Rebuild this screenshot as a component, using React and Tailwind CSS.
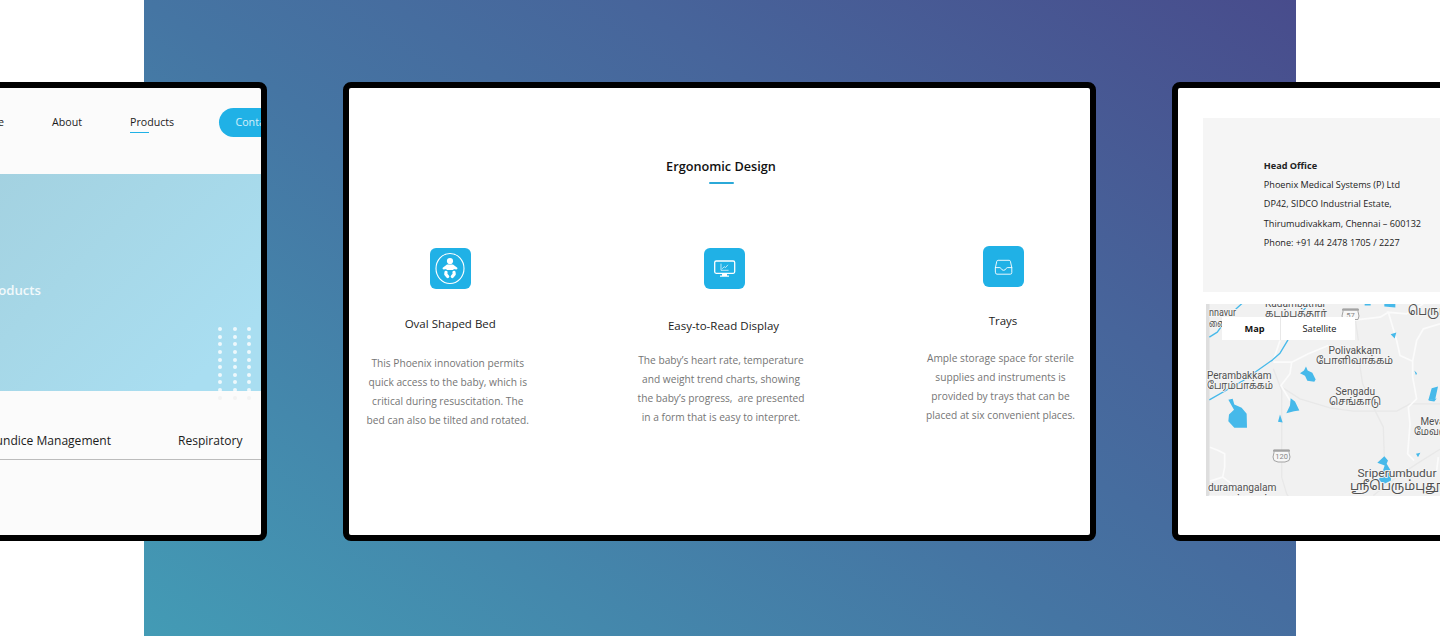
const features = [
  {
    title: "Oval Shaped Bed",
    icon: "baby",
    lines: ["This Phoenix innovation permits", "quick access to the baby, which is", "critical during resuscitation. The", "bed can also be tilted and rotated."],
    column: "w-[163.500px] pt-[160px]",
    iconBox: "ml-[5px]",
    heading: "mt-[26px] ml-[5px]",
    copy: "mt-[21px]",
  },
  {
    title: "Easy-to-Read Display",
    icon: "monitor",
    lines: ["The baby’s heart rate, temperature", "and weight trend charts, showing", "the baby’s progress,  are presented", "in a form that is easy to interpret."],
    column: "ml-[107.500px] w-[168px] pt-[160px]",
    iconBox: "ml-[6px]",
    heading: "mt-[27.500px] ml-[5px]",
    copy: "mt-[16.500px]",
  },
  {
    title: "Trays",
    icon: "tray",
    lines: ["Ample storage space for sterile", "supplies and instruments is", "provided by trays that can be", "placed at six convenient places."],
    column: "ml-[120.500px] w-[150px] pt-[157.500px]",
    iconBox: "ml-[6px]",
    heading: "mt-[25.500px] ml-[5px]",
    copy: "mt-[18.500px]",
  },
];

function Device({ children, tone }) {
  return (
    <div className={`h-[459px] w-[753px] shrink-0 overflow-hidden rounded-[8px] border-[6px] border-black ${tone}`}>
      {children}
    </div>
  );
}

function FeatureIcon({ name }) {
  return (
    <svg width="41" height="41" viewBox="0 0 41 41" fill="none" stroke="#fff" strokeLinecap="round" strokeLinejoin="round">
      <rect width="41" height="41" rx="6" fill="#20b1e6" stroke="none" />
      {name === "baby" && (
        <g>
          <ellipse cx="20" cy="20.5" rx="14" ry="15" strokeWidth="1.1" />
          <circle cx="20" cy="13" r="3.1" fill="#fff" stroke="none" />
          <path d="M17 16.600h6l4.300 3.200q.7 1.500-1 1.700l-2.800-.6v1.200h-7v-1.200l-2.800.6q-1.700-.2-1-1.700z" fill="#fff" stroke="none" />
          <path d="M16 24.400l-.2 1.800 1.900 2.300M24 24.400l.2 1.800-1.900 2.300" strokeWidth="3.200" />
        </g>
      )}
      {name === "monitor" && (
        <g>
          <rect x="10.700" y="13" width="20" height="12.300" rx="1.500" strokeWidth="1.300" />
          <path d="M18 25.500h5v2h2v1.300h-9v-1.300h2z" fill="#fff" stroke="none" />
          <path d="M17 16v6.300h7.200M18.500 20.500l1.700-1.800 1.300.9 2.200-2.500" strokeWidth=".7" />
        </g>
      )}
      {name === "tray" && (
        <g strokeWidth=".9">
          <path d="M12.400 21.600l1.400-6.300q.3-1 1.300-1h11q1 0 1.300 1l1.400 6.300v5q0 1.600-1.600 1.600H14q-1.600 0-1.600-1.600z" />
          <path d="M12.400 21.600h4.500q.7 0 1 .8 1 1.900 2.700 1.900t2.700-1.900q.3-.8 1-.8h4.500" />
        </g>
      )}
    </svg>
  );
}

function ProductsScreen() {
  return (
    <div className="flex h-full flex-col text-[#1c1c1c]">
      <nav className="flex h-[85.500px] shrink-0 text-[10.650px] leading-[16px]">
        <span className="ml-[454px] mt-[26px] w-[78px] shrink-0">Home</span>
        <span className="mt-[26px] w-[78px] shrink-0">About</span>
        <div className="mt-[26px] w-[88.500px] shrink-0">
          <div>Products</div>
          <div className="mt-[1.500px] h-[1.500px] w-[19px] bg-[#20b1e6]" />
        </div>
        <span className="mt-[20px] h-[28.500px] w-[88px] shrink-0 rounded-full bg-[#20b1e6] pl-[17px] pt-[6px] text-white/80">
          Contact us
        </span>
      </nav>
      <div className="relative flex h-[217.500px] shrink-0 bg-linear-[135deg,#a3d1e0_48%,#a6d7e7_68%,#a9def1_92%]">
        <span className="mt-[106px] w-[521px] text-right text-[13.200px] font-semibold leading-[20px] text-white/85">Products</span>
        <div className="absolute left-[698px] top-[153.500px] grid grid-cols-3 gap-x-[10.700px] gap-y-[3.650px]">
          {Array.from({ length: 30 }, (_, i) => (
            <span key={i} className={`size-[4px] rounded-full ${i < 27 ? "bg-white/80" : "bg-[#f3f3f3]"}`} />
          ))}
        </div>
      </div>
      <div className="flex h-[69px] shrink-0 border-b border-[#bcbcbc] pt-[39.500px] text-[12.050px] leading-[20px]">
        <span className="w-[591px] text-right">Jaundice Management</span>
        <span className="ml-[67px]">Respiratory</span>
      </div>
    </div>
  );
}

function FeatureScreen() {
  return (
    <div className="relative flex h-full items-start pl-[17px]">
      <div className="absolute left-[272px] top-[68px] flex w-[200px] flex-col items-center">
        <h2 className="text-[12.700px] font-semibold leading-[20px] text-[#111]">Ergonomic Design</h2>
        <div className="mt-[6px] h-[2px] w-[25px] rounded-full bg-[#2ba9d8]" />
      </div>
      <div className="flex items-start">
        {features.map((f) => (
          <section key={f.title} className={`flex shrink-0 flex-col items-center ${f.column}`}>
            <div className={f.iconBox}>
              <FeatureIcon name={f.icon} />
            </div>
            <h3 className={`whitespace-nowrap text-[11.500px] leading-[18px] text-[#1c1c1c] ${f.heading}`}>{f.title}</h3>
            <div className={`text-center text-[10.200px] leading-[19px] text-[#757575] ${f.copy}`}>
              {f.lines.map((l) => (
                <p key={l} className="whitespace-pre">{l}</p>
              ))}
            </div>
          </section>
        ))}
      </div>
    </div>
  );
}

function Label({ x, y, w, size = 10.5, children }) {
  return (
    <text x={x} y={y} fontSize={size} textLength={w} lengthAdjust="spacingAndGlyphs" fill="#505050" stroke="#f6f6f6" strokeWidth="1.600" paintOrder="stroke">
      {children}
    </text>
  );
}

function RegionMap() {
  return (
    <svg width="254" height="192" viewBox="1206 303.500 254 192" className="font-[family-name:Roboto,'Noto_Sans_Tamil',sans-serif]">
      <rect x="1206" y="303" width="254" height="193" fill="#f1f1f1" />
      <rect x="1206" y="303" width="3.500" height="193" fill="#dedede" />
      <g transform="translate(1190 290) scale(.33333)" fill="none" strokeLinejoin="round">
        <g stroke="#e8e8e8" strokeWidth="4">
          <path d="M250 235L275 300V560L290 610L310 640M275 290L330 325L420 352L490 362H620L660 340H760M500 165L518 280L550 350L580 410L583 500L600 560M495 80L505 150M550 615L620 560L680 520L760 470" />
        </g>
        <g stroke="#fbfbfb" strokeWidth="5">
          <path d="M270 150L250 210M250 215H305L300 250L273 285L300 330M415 165L355 190L305 215M440 95L570 80L595 65L620 150L630 195L668 212M750 100L700 115L680 150L668 212V260L680 325L655 350L660 400L653 490L672 510M60 470L85 480L104 490V530L98 560L60 572M98 560L125 580M590 65L650 70L700 40M745 500L740 540" />
        </g>
        <g stroke="#46b9ea" strokeWidth="4">
          <path d="M58 140L82 125L96 105M137 56L157 38M330 72L358 38M294 148L270 188L248 208L160 270L58 328" />
        </g>
        <g fill="#46b9ea">
          <path d="M330 248L342 240L348 228L353 240L367 247L377 267L373 274L352 271L345 256zM602 131L619 126L614 144zM583 40H616V51L583 48zM524 40H542V45H524zM673 240L681 248L678 254zM725 293L744 288L736 325L715 329z" />
          <path d="M115 328L128 325L133 342L155 352L170 370L171 412H133L115 392L117 372L132 358zM302 323L315 333L328 360L312 362L289 368L300 345zM270 372L278 396L264 394zM715 328L740 324L733 333L718 331zM583 497L594 510L590 520L602 540L603 570L585 579L562 569L572 560L584 525L562 517zM678 490L691 487L684 500z" />
        </g>
      </g>
      <g fill="#f7f7f7" stroke="#a3a3a3" strokeWidth="1">
        <path d="M1273.500 449.500h16l-.5 2.500q2 5 0 8l-4 1.500h-7l-4-1.500q-2-3 0-8z" />
        <path d="M1342.500 308.500h16l-.5 2.500q2 5 0 8h-15q-2-3 0-8z" />
        <path d="M1274 450.200h15M1343 309.200h15" strokeWidth="2" />
      </g>
      <g fontSize="7.500" fill="#888" textAnchor="middle">
        <text x="1281.700" y="458.800">120</text>
        <text x="1350.500" y="317.800">57</text>
      </g>
      <Label x={1209} y={315.5} w={27}>nnavur</Label>
      <Label x={1209} y={326} w={17}>னை</Label>
      <Label x={1265} y={306.5} w={61}>Kadambathur</Label>
      <Label x={1265} y={316.5} w={62}>கடம்பத்தூர்</Label>
      <Label x={1408} y={314.5} w={60} size={13}>பெருமாள்</Label>
      <Label x={1328.5} y={353.5} w={52.5}>Polivakkam</Label>
      <Label x={1316} y={363.5} w={77}>போளிவாக்கம்</Label>
      <Label x={1207} y={378.5} w={64.5}>Perambakkam</Label>
      <Label x={1207} y={388.5} w={66}>பேரம்பாக்கம்</Label>
      <Label x={1335.5} y={394} w={39.5}>Sengadu</Label>
      <Label x={1329} y={404} w={52}>செங்காடு</Label>
      <Label x={1420.5} y={424} w={35}>Mevalur</Label>
      <Label x={1414} y={434.5} w={46}>மேவளூர்</Label>
      <Label x={1357.5} y={476.5} w={79} size={11.5}>Sriperumbudur</Label>
      <Label x={1350} y={489.5} w={102} size={13}>ஸ்ரீபெரும்புதூர்</Label>
      <Label x={1208} y={490.5} w={68.5}>duramangalam</Label>
      <Label x={1208} y={501} w={62}>துரமங்கலம்</Label>
    </svg>
  );
}

function ContactScreen() {
  return (
    <div className="flex flex-col pl-[25.300px] pt-[30px]">
      <address className="h-[174px] w-[690px] bg-[#f5f5f5] pl-[60.500px] pt-[37.800px] text-[9.150px] not-italic leading-[19.300px] text-[#222]">
        <div className="font-bold">Head Office</div>
        <div>Phoenix Medical Systems (P) Ltd</div>
        <div>DP42, SIDCO Industrial Estate,</div>
        <div>Thirumudivakkam, Chennai – 600132</div>
        <div>Phone: +91 44 2478 1705 / 2227</div>
      </address>
      <div className="relative ml-[2.700px] mt-[11.500px] h-[192px] w-[254px] overflow-hidden">
        <RegionMap />
        <div className="absolute left-[16px] top-[13.500px] flex h-[23px] w-[133px] bg-white text-[9.200px] leading-[23px] text-[#111]">
          <span className="w-[59.500px] border-r border-[#e8e8e8] pl-[22.500px] font-bold">Map</span>
          <span className="pl-[21px]">Satellite</span>
        </div>
      </div>
    </div>
  );
}

export default function App() {
  return (
    <main className="h-[636px] w-full overflow-hidden bg-white font-['Open_Sans',sans-serif]">
      <div className="mx-auto flex h-full w-[1152px] bg-linear-[34deg,#439bb5_0%,#4575a3_45%,#47659b_68%,#484c8c_100%]">
        <div className="ml-[-630px] mt-[82px] flex shrink-0 gap-[76px]">
          <Device tone="bg-[#fbfbfb]">
            <ProductsScreen />
          </Device>
          <Device tone="bg-white">
            <FeatureScreen />
          </Device>
          <Device tone="bg-white">
            <ContactScreen />
          </Device>
        </div>
      </div>
    </main>
  );
}
